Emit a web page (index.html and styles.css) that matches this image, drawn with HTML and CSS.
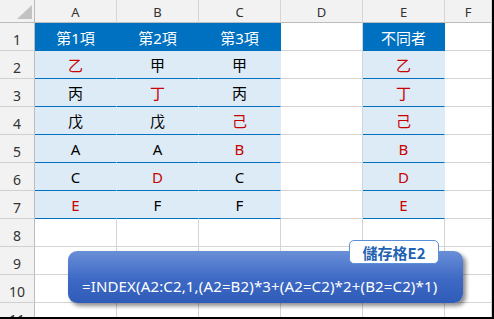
FILE: index.html
```html
<!DOCTYPE html>
<html>
<head>
<meta charset="utf-8">
<link rel="stylesheet" href="styles.css">
</head>
<body>
<div class="frame">
  <div class="sheet">
    <div class="corner"><span class="tri"></span></div>
    <div class="ch">A</div><div class="ch">B</div><div class="ch">C</div><div class="ch">D</div><div class="ch">E</div><div class="ch">F</div>

    <div class="rh">1</div>
    <div class="c hd">第1項</div><div class="c hd">第2項</div><div class="c hd">第3項</div><div class="c"></div><div class="c hd">不同者</div><div class="c"></div>

    <div class="rh">2</div>
    <div class="c dt red">乙</div><div class="c dt">甲</div><div class="c dt">甲</div><div class="c"></div><div class="c dt red">乙</div><div class="c"></div>

    <div class="rh">3</div>
    <div class="c dt">丙</div><div class="c dt red">丁</div><div class="c dt">丙</div><div class="c"></div><div class="c dt red">丁</div><div class="c"></div>

    <div class="rh">4</div>
    <div class="c dt">戊</div><div class="c dt">戊</div><div class="c dt red">己</div><div class="c"></div><div class="c dt red">己</div><div class="c"></div>

    <div class="rh">5</div>
    <div class="c dt">A</div><div class="c dt">A</div><div class="c dt red">B</div><div class="c"></div><div class="c dt red">B</div><div class="c"></div>

    <div class="rh">6</div>
    <div class="c dt">C</div><div class="c dt red">D</div><div class="c dt">C</div><div class="c"></div><div class="c dt red">D</div><div class="c"></div>

    <div class="rh">7</div>
    <div class="c dt red">E</div><div class="c dt">F</div><div class="c dt">F</div><div class="c"></div><div class="c dt red">E</div><div class="c"></div>

    <div class="rh">8</div>
    <div class="c"></div><div class="c"></div><div class="c"></div><div class="c"></div><div class="c"></div><div class="c"></div>

    <div class="rh">9</div>
    <div class="c"></div><div class="c"></div><div class="c"></div><div class="c"></div><div class="c"></div><div class="c"></div>

    <div class="rh">10</div>
    <div class="c"></div><div class="c"></div><div class="c"></div><div class="c"></div><div class="c"></div><div class="c"></div>

    <div class="rh">11</div>
    <div class="c"></div><div class="c"></div><div class="c"></div><div class="c"></div><div class="c"></div><div class="c"></div>
  </div>

  <div class="callout">=INDEX(A2:C2,1,(A2=B2)*3+(A2=C2)*2+(B2=C2)*1)</div>
  <div class="tag">儲存格E2</div>
</div>
</body>
</html>
```

FILE: styles.css
```css
* { box-sizing: border-box; }

html, body {
  margin: 0;
  padding: 0;
  background: #ffffff;
}

.frame {
  position: relative;
  width: 494px;
  height: 319px;
  overflow: hidden;
  border-right: 2px solid #000;
  border-bottom: 2px solid #000;
  font-family: "Noto Sans", "Noto Sans CJK TC", sans-serif;
}

.sheet {
  display: grid;
  grid-template-columns: 35px 82px 82px 82px 82px 82px 47px;
  grid-template-rows: 23px repeat(11, 28px);
}

.corner {
  position: relative;
  background: #f2f2f2;
  border-right: 1px solid #bcbcbc;
  border-bottom: 1px solid #bcbcbc;
}

.tri {
  position: absolute;
  left: 17px;
  top: 5px;
  width: 0;
  height: 0;
  border-left: 15px solid transparent;
  border-bottom: 14px solid #c3c3c3;
}

.ch {
  background: #f2f2f2;
  border-right: 1px solid #d6d6d6;
  border-bottom: 1px solid #bcbcbc;
  color: #333;
  font-size: 13px;
  display: flex;
  align-items: center;
  justify-content: center;
  padding-top: 1px;
}

.rh {
  background: #f2f2f2;
  border-right: 1px solid #bcbcbc;
  border-bottom: 1px solid #d0d0d0;
  color: #333;
  font-size: 14px;
  display: flex;
  align-items: center;
  justify-content: center;
  padding-top: 6px;
}

.c {
  border-right: 1px solid #d4d4d4;
  border-bottom: 1px solid #d4d4d4;
  display: flex;
  align-items: center;
  justify-content: center;
  font-size: 15px;
  color: #000;
  font-family: "Noto Sans", "Noto Sans CJK TC", sans-serif;
}

.hd {
  background: #0070c0;
  border-right-color: #0070c0;
  border-bottom-color: #0070c0;
  color: #fff;
  padding-top: 1px;
}

.dt {
  background: #ddebf7;
  border-right-color: #ddebf7;
  border-bottom-color: #0070c0;
}

.red { color: #c80000; }

.callout {
  position: absolute;
  left: 68px;
  top: 251px;
  width: 395px;
  height: 52px;
  border-radius: 9px;
  background: linear-gradient(#6a8fd8, #3d69c4 55%, #2f5cb8);
  box-shadow: 3px 3px 4px rgba(0, 0, 0, 0.45);
  color: #fff;
  font-size: 15px;
  line-height: 20px;
  letter-spacing: 0.15px;
  padding: 25px 0 0 14px;
  white-space: nowrap;
}

.tag {
  position: absolute;
  left: 349px;
  top: 240px;
  width: 90px;
  height: 24px;
  background: #fff;
  border: 1px solid #5b8fd6;
  border-radius: 5px;
  color: #1f63b2;
  font-weight: bold;
  font-size: 15px;
  display: flex;
  align-items: center;
  justify-content: center;
  font-family: "Noto Sans CJK TC", sans-serif;
}
```
